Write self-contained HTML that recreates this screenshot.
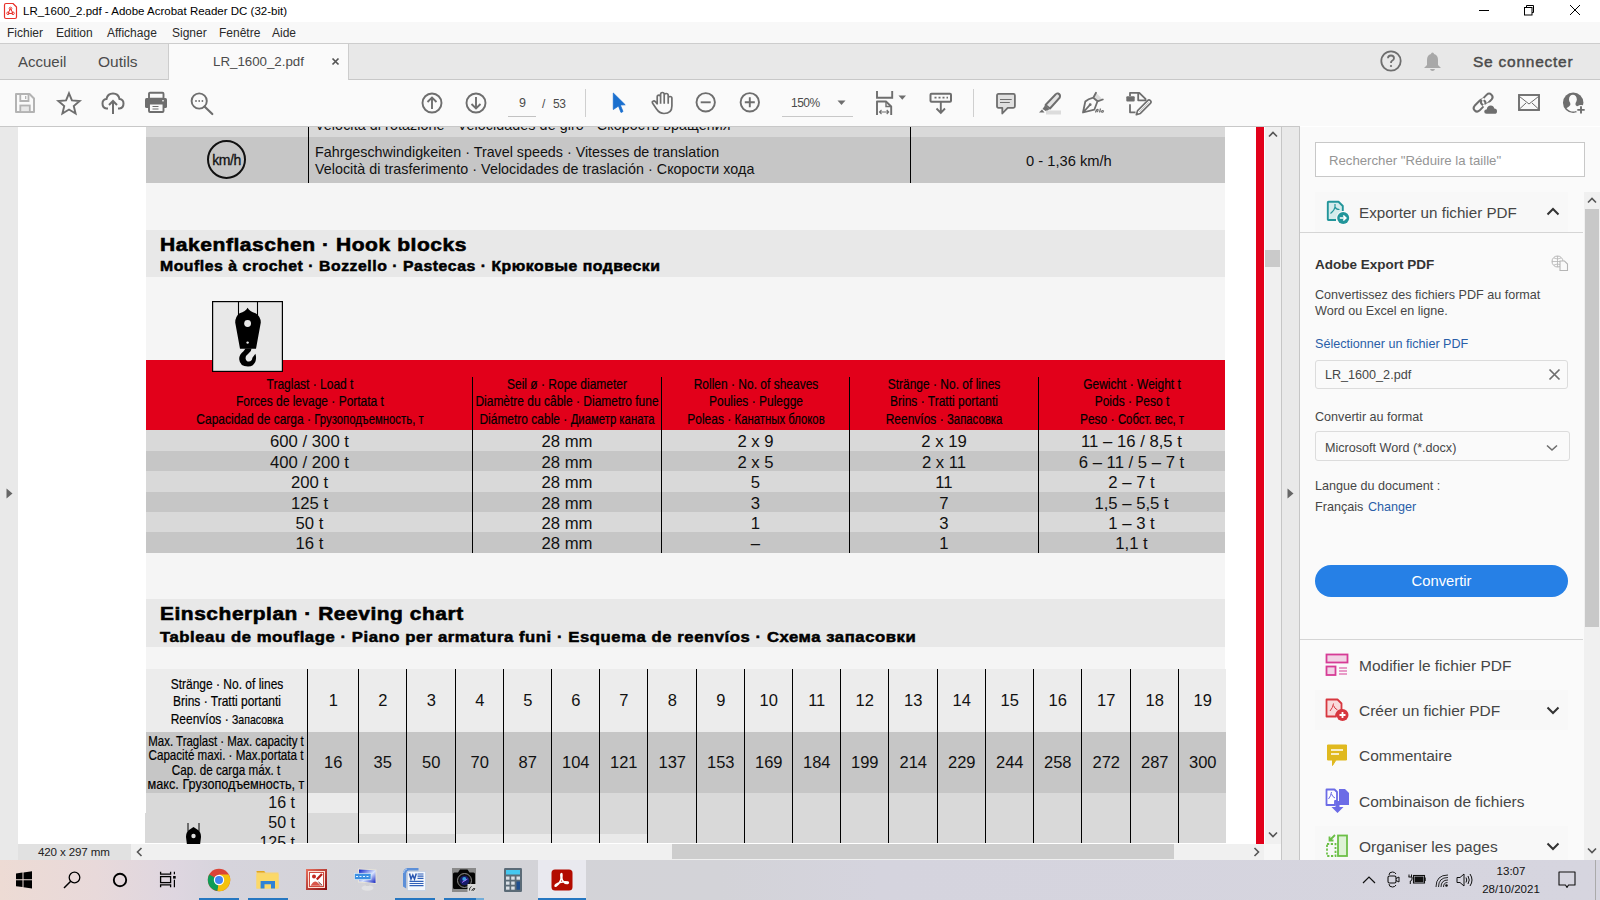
<!DOCTYPE html>
<html><head><meta charset="utf-8"><style>
*{margin:0;padding:0;box-sizing:border-box}
html,body{width:1600px;height:900px;overflow:hidden;background:#fff;font-family:"Liberation Sans",sans-serif}
.a{position:absolute}
.t{position:absolute;white-space:nowrap;line-height:1}
svg{position:absolute;overflow:visible}
.pt{font-size:14.3px;color:#111}
.ft{font-weight:bold;color:#000;-webkit-text-stroke:0.4px #000}
.hh{font-size:14.8px;color:#000;-webkit-text-stroke:0.2px #000;text-align:center;transform:scaleX(0.81);transform-origin:center}
.cy{font-size:14px}
.hv{font-size:16.7px;color:#111;text-align:center}
.rn{font-size:16.5px;color:#111;text-align:center}
</style></head><body>
<div class="a" style="left:0;top:0;width:1600px;height:22px;background:#fff"></div>
<svg style="left:3px;top:2px" width="15" height="18" viewBox="0 0 15 18"><path d="M3 1.5 H10 L13.5 5 V15 Q13.5 16.5 12 16.5 H3 Q1.5 16.5 1.5 15 V3 Q1.5 1.5 3 1.5 Z" fill="#fff" stroke="#e8312a" stroke-width="1.2" stroke-linejoin="round"/><path d="M7.5 6.5 L5.2 11 M7.5 6.5 L9.8 11 M5.2 11.5 H9.8" fill="none" stroke="#e8312a" stroke-width="1"/><circle cx="7.5" cy="6.5" r="1.3" fill="none" stroke="#e8312a" stroke-width="0.9"/><circle cx="5" cy="11.3" r="1.3" fill="none" stroke="#e8312a" stroke-width="0.9"/><circle cx="10" cy="11.3" r="1.3" fill="none" stroke="#e8312a" stroke-width="0.9"/></svg>
<div class="t" style="left:23px;top:6px;font-size:11.5px;color:#000">LR_1600_2.pdf - Adobe Acrobat Reader DC (32-bit)</div>
<div class="a" style="left:1479px;top:10px;width:10px;height:1px;background:#000"></div>
<svg style="left:1523px;top:4px" width="12" height="12" viewBox="0 0 12 12"><rect x="1.5" y="3.5" width="7.5" height="7.5" fill="none" stroke="#000" stroke-width="1"/><path d="M3.5 3.5 V1.5 H10.5 V8.5 H9" fill="none" stroke="#000" stroke-width="1"/></svg>
<svg style="left:1569px;top:4px" width="12" height="12" viewBox="0 0 12 12"><path d="M1 1 L11 11 M11 1 L1 11" stroke="#000" stroke-width="1"/></svg>
<div class="a" style="left:0;top:22px;width:1600px;height:21px;background:#f8f8f8"></div>
<div class="t" style="left:7px;top:27px;font-size:12px;color:#2a2a2a">Fichier</div>
<div class="t" style="left:56px;top:27px;font-size:12px;color:#2a2a2a">Edition</div>
<div class="t" style="left:107px;top:27px;font-size:12px;color:#2a2a2a">Affichage</div>
<div class="t" style="left:172px;top:27px;font-size:12px;color:#2a2a2a">Signer</div>
<div class="t" style="left:219px;top:27px;font-size:12px;color:#2a2a2a">Fenêtre</div>
<div class="t" style="left:272px;top:27px;font-size:12px;color:#2a2a2a">Aide</div>
<div class="a" style="left:0;top:43px;width:1600px;height:37px;background:#e8e8e8;border-top:1px solid #cdcdcd;border-bottom:1px solid #c8c8c8"></div>
<div class="a" style="left:168px;top:43px;width:181px;height:37px;background:#fafafa;border-left:1px solid #cdcdcd;border-right:1px solid #cdcdcd;border-top:1px solid #cdcdcd"></div>
<div class="t" style="left:18px;top:54px;font-size:15px;color:#4b4b4b">Accueil</div>
<div class="t" style="left:98px;top:54px;font-size:15.5px;color:#4b4b4b">Outils</div>
<div class="t" style="left:213px;top:55px;font-size:13.3px;color:#4b4b4b">LR_1600_2.pdf</div>
<svg style="left:331px;top:57px" width="9" height="9" viewBox="0 0 9 9"><path d="M1.5 1.5 L7.5 7.5 M7.5 1.5 L1.5 7.5" stroke="#555" stroke-width="1.7"/></svg>
<svg style="left:1380px;top:50px" width="22" height="22" viewBox="0 0 22 22"><circle cx="11" cy="11" r="9.7" fill="none" stroke="#6e6e6e" stroke-width="1.8"/><path d="M8 8.3 Q8 5.5 11 5.5 Q14 5.5 14 8.2 Q14 10 11.8 11 Q11 11.5 11 13" fill="none" stroke="#6e6e6e" stroke-width="1.8"/><circle cx="11" cy="16" r="1.1" fill="#6e6e6e"/></svg>
<svg style="left:1423px;top:51px" width="19" height="21" viewBox="0 0 19 21"><path d="M9.5 1.5 Q11 1.5 11 3 Q15 4 15 9 V14 L18 17 H1 L4 14 V9 Q4 4 8 3 Q8 1.5 9.5 1.5 Z" fill="#a8a8a8"/><path d="M7 18 H12 Q11.5 20 9.5 20 Q7.5 20 7 18Z" fill="#a8a8a8"/></svg>
<div class="t" style="left:1473px;top:54px;font-size:15.5px;letter-spacing:0.75px;color:#4b4b4b;-webkit-text-stroke:0.45px #4b4b4b">Se connecter</div>
<div class="a" style="left:0;top:80px;width:1600px;height:46px;background:#fafafa"></div>
<div class="a" style="left:0;top:126px;width:1300px;height:1px;background:#c8c8c8"></div>
<svg style="left:15px;top:93px" width="20" height="20" viewBox="0 0 20 20"><path d="M1 1 H14.5 L19 5.5 V19 H1 Z" fill="none" stroke="#b3b3b3" stroke-width="2" stroke-linejoin="round"/><path d="M5.3 1 V8 H13.5 V1" fill="none" stroke="#b3b3b3" stroke-width="1.8"/><rect x="10" y="3" width="1.3" height="3" fill="#b3b3b3"/><rect x="5.3" y="12.5" width="9.5" height="6.5" fill="#e8e8e8" stroke="#b3b3b3" stroke-width="1.8"/></svg>
<svg style="left:56px;top:92px" width="26" height="24" viewBox="0 0 26 24"><path d="M13.00 1.30 L15.94 8.45 L23.65 9.04 L17.76 14.05 L19.58 21.56 L13.00 17.50 L6.42 21.56 L8.24 14.05 L2.35 9.04 L10.06 8.45 Z" fill="none" stroke="#6e6e6e" stroke-width="1.9" stroke-linejoin="miter"/></svg>
<svg style="left:101px;top:92px" width="24" height="23" viewBox="0 0 24 23"><path d="M7 16.5 H5.5 Q1.5 16 1.5 11.5 Q1.5 7.5 5.5 7 Q6.5 1.5 12 1.5 Q17.5 1.5 18.5 7 Q22.5 7.5 22.5 11.5 Q22.5 16 18.5 16.5 H17" fill="none" stroke="#6e6e6e" stroke-width="2"/><path d="M12 22 V9 M8 13 L12 9 L16 13" fill="none" stroke="#6e6e6e" stroke-width="2"/></svg>
<svg style="left:145px;top:92px" width="22" height="21" viewBox="0 0 22 21"><rect x="4" y="0.7" width="14.5" height="6" rx="1" fill="none" stroke="#6e6e6e" stroke-width="1.9"/><rect x="0" y="6" width="22" height="10" rx="1.5" fill="#6e6e6e"/><rect x="4" y="11.5" width="14.5" height="8.5" rx="1" fill="#fafafa" stroke="#6e6e6e" stroke-width="1.9"/><rect x="7.5" y="14" width="6" height="1" fill="#6e6e6e"/><rect x="7.5" y="16.5" width="6" height="1" fill="#6e6e6e"/><rect x="17" y="8.3" width="2" height="1" fill="#fafafa"/></svg>
<svg style="left:190px;top:92px" width="24" height="23" viewBox="0 0 24 23"><circle cx="9.2" cy="9" r="7.6" fill="none" stroke="#6e6e6e" stroke-width="1.9"/><path d="M14.5 14.5 L22.3 22" stroke="#6e6e6e" stroke-width="2.2" stroke-linecap="round"/><circle cx="6" cy="9" r="0.9" fill="#6e6e6e"/><circle cx="9.2" cy="9" r="0.9" fill="#6e6e6e"/><circle cx="12.4" cy="9" r="0.9" fill="#6e6e6e"/></svg>
<svg style="left:421px;top:92px" width="22" height="22" viewBox="0 0 22 22"><circle cx="11" cy="11" r="9.5" fill="none" stroke="#6e6e6e" stroke-width="1.9"/><path d="M11 17 V5.5 M6.5 10 L11 5.5 L15.5 10" fill="none" stroke="#6e6e6e" stroke-width="1.9"/></svg>
<svg style="left:465px;top:92px" width="22" height="22" viewBox="0 0 22 22"><circle cx="11" cy="11" r="9.5" fill="none" stroke="#6e6e6e" stroke-width="1.9"/><path d="M11 5 V16.5 M6.5 12 L11 16.5 L15.5 12" fill="none" stroke="#6e6e6e" stroke-width="1.9"/></svg>
<div class="t" style="left:519px;top:97px;font-size:12.5px;color:#4b4b4b">9</div>
<div class="a" style="left:508px;top:116px;width:28px;height:1px;background:#c2c2c2"></div>
<div class="t" style="left:542px;top:97.5px;font-size:12px;color:#4b4b4b">/</div>
<div class="t" style="left:553px;top:97.5px;font-size:12px;color:#4b4b4b;letter-spacing:-0.3px">53</div>
<div class="a" style="left:585px;top:89px;width:1px;height:28px;background:#cfcfcf"></div>
<svg style="left:612px;top:92px" width="15" height="22" viewBox="0 0 15 22"><path d="M1.3 1 L13.2 12.8 L8.3 13 L11 19.5 L9 20.5 L6.5 14 L1.3 17.5 Z" fill="#1a6fce" stroke="#1a6fce" stroke-width="0.8" stroke-linejoin="round"/></svg>
<svg style="left:650px;top:90px" width="24" height="25" viewBox="0 0 24 25"><path d="M7.2 14.5 V7 Q7.2 5.1 8.9 5.1 Q10.6 5.1 10.6 7 V4.4 Q10.6 2.5 12.4 2.5 Q14.2 2.5 14.2 4.4 V5.4 Q14.2 3.5 16.2 3.5 Q18.2 3.5 18.2 5.4 V8.3 Q18.2 6.5 20.1 6.5 Q21.9 6.5 21.9 8.3 V16 Q21.9 23.5 14 23.5 Q9.5 23.5 6.5 19 L2.6 13.3 Q1.8 11.8 3 11.2 Q4.3 10.5 5.5 11.8 L7.2 14 M10.6 7 V13.7 M14.2 5.4 V13.7 M18.2 8.3 V13.7" fill="none" stroke="#6e6e6e" stroke-width="1.7" stroke-linejoin="round"/></svg>
<svg style="left:695px;top:92px" width="22" height="22" viewBox="0 0 22 22"><circle cx="10.7" cy="10.3" r="9.2" fill="none" stroke="#6e6e6e" stroke-width="1.9"/><path d="M5.7 10.3 H15.7" stroke="#6e6e6e" stroke-width="1.9"/></svg>
<svg style="left:739px;top:92px" width="22" height="22" viewBox="0 0 22 22"><circle cx="10.8" cy="10.3" r="9.2" fill="none" stroke="#6e6e6e" stroke-width="1.9"/><path d="M5.8 10.3 H15.8 M10.8 5.3 V15.3" stroke="#6e6e6e" stroke-width="1.9"/></svg>
<div class="t" style="left:791px;top:97px;font-size:12px;color:#4b4b4b;letter-spacing:-0.5px">150%</div>
<svg style="left:837px;top:100px" width="9" height="6" viewBox="0 0 9 6"><path d="M0.5 0.5 H8.5 L4.5 5 Z" fill="#6e6e6e"/></svg>
<div class="a" style="left:782px;top:116px;width:71px;height:1px;background:#c8c8c8"></div>
<svg style="left:875px;top:90px" width="34" height="26" viewBox="0 0 34 26"><path d="M2 1 V7.8 H17.2 V1" fill="none" stroke="#6e6e6e" stroke-width="1.9"/><path d="M2 25 V11.5 H11 L16.2 16.5 V25" fill="none" stroke="#6e6e6e" stroke-width="1.9" stroke-linejoin="round"/><path d="M11 11.5 V16.5 H16.2" fill="none" stroke="#6e6e6e" stroke-width="1.4"/><path d="M4.5 22 H13.7 M6.5 20 L4.5 22 L6.5 24 M11.7 20 L13.7 22 L11.7 24" fill="none" stroke="#6e6e6e" stroke-width="1.1"/><path d="M23.5 5.5 H31 L27.3 9.8 Z" fill="#6e6e6e"/></svg>
<svg style="left:929px;top:92px" width="24" height="23" viewBox="0 0 24 23"><rect x="1.5" y="1.7" width="20.5" height="8" rx="1" fill="none" stroke="#6e6e6e" stroke-width="2"/><path d="M5.5 5.7 H7.5 M9.5 5.7 H11.5 M13.5 5.7 H15.5 M17.5 5.7 H19" stroke="#6e6e6e" stroke-width="1.8"/><path d="M11.8 10 V21 M7.5 16.5 L11.8 20.8 L16 16.5" fill="none" stroke="#6e6e6e" stroke-width="1.9"/></svg>
<div class="a" style="left:973px;top:89px;width:1px;height:28px;background:#cfcfcf"></div>
<svg style="left:995px;top:92px" width="22" height="23" viewBox="0 0 22 23"><path d="M3.5 1.9 H18.4 Q19.9 1.9 19.9 3.4 V14.3 Q19.9 15.8 18.4 15.8 H12.7 L7.3 21.5 V15.8 H3.5 Q2 15.8 2 14.3 V3.4 Q2 1.9 3.5 1.9 Z" fill="#e0e0e0" stroke="#6e6e6e" stroke-width="1.8" stroke-linejoin="round"/><path d="M5 7.5 H16.7 M5 10.5 H14.8" stroke="#6e6e6e" stroke-width="1.1"/></svg>
<svg style="left:1037px;top:92px" width="25" height="23" viewBox="0 0 25 23"><path d="M21 1.5 Q23.8 2.5 22.8 5.5 L13 16.5 L8.5 13 L18.5 2.5 Q19.5 1 21 1.5 Z" fill="#e4e4e4" stroke="#6e6e6e" stroke-width="1.9" stroke-linejoin="round"/><path d="M8 13.5 L12.5 17 L9.5 19.5 L5.5 17 Z" fill="#6e6e6e"/><path d="M2 20.5 L5 17.5 L7.5 20.5 Z" fill="#6e6e6e"/><rect x="9" y="18.5" width="15" height="4" fill="#dcdcdc"/></svg>
<svg style="left:1081px;top:91px" width="26" height="24" viewBox="0 0 26 24"><path d="M15 1.7 L21.8 8.5 L16.5 10 L12.3 6.7 Z" fill="#dcdcdc"/><path d="M15 1.7 L12.3 6.7 L16.5 10.3 L21.8 8.5 M12.3 6.7 Q7 8 4.3 10.5 L2 21.5 L13.3 18.7 L16.5 10.3 M2.5 21 L9.2 13.7" fill="none" stroke="#6e6e6e" stroke-width="1.8" stroke-linejoin="round" stroke-linecap="round"/><circle cx="9.2" cy="13.7" r="1.4" fill="#6e6e6e"/><path d="M14.5 21.5 Q15.5 18 17 18.5 Q17.5 20 16 21 M18.5 21.5 L19.5 17.5 M20 21 Q21 19 22.5 20 Q22.5 21.5 20.5 21.5" fill="none" stroke="#6e6e6e" stroke-width="1.2"/></svg>
<svg style="left:1124px;top:91px" width="28" height="25" viewBox="0 0 28 25"><path d="M6 5 V1.8 H15.3 L21.5 7.8 V10 M14.2 2 V9.3 H21.5 M6 13.3 V21.3 H11.5" fill="none" stroke="#6e6e6e" stroke-width="1.8" stroke-linejoin="round"/><rect x="2.3" y="5.2" width="8.4" height="5.3" rx="1" fill="#6e6e6e"/><path d="M12.3 23.7 L13.6 19.6 L23.6 9.6 Q25 8.2 26.4 9.6 Q27.8 11 26.4 12.4 L16.4 22.4 Z" fill="none" stroke="#6e6e6e" stroke-width="1.6" stroke-linejoin="round"/><path d="M15.2 21 L25 11.2" stroke="#aaa" stroke-width="0.8"/></svg>
<svg style="left:1470px;top:90px" width="30" height="26" viewBox="0 0 30 26"><path d="M16.77 14.53 L21.67 9.33 A3.4 3.4 0 0 0 16.73 4.67 L11.83 9.87 A3.4 3.4 0 0 0 16.77 14.53 Z" fill="none" stroke="#6e6e6e" stroke-width="2"/><path d="M9.40 20.60 L14.60 15.40 A3.4 3.4 0 0 0 9.80 10.60 L4.60 15.80 A3.4 3.4 0 0 0 9.40 20.60 Z" fill="none" stroke="#6e6e6e" stroke-width="2"/><path d="M12.3 8.7 L13.8 10.2 M13.4 16.4 L15 14.8" stroke="#fafafa" stroke-width="2.6"/><circle cx="21" cy="19.5" r="7.3" fill="#fafafa"/><path d="M16.5 23.8 Q14.2 23.8 14.2 21.6 Q14.2 19.3 16.8 19.2 Q17.3 15.5 20.8 15.5 Q23.6 15.5 24.3 18.6 Q27 18.8 27 21.2 Q27 23.8 24.5 23.8 Z" fill="#6e6e6e"/></svg>
<svg style="left:1518px;top:94px" width="22" height="17" viewBox="0 0 22 17"><rect x="1" y="1" width="20" height="15" fill="none" stroke="#6e6e6e" stroke-width="1.9"/><path d="M1.5 2.5 L11 10 L20.5 2.5 M1.5 15 L8 9 M20.5 15 L14 9" fill="none" stroke="#6e6e6e" stroke-width="1"/></svg>
<svg style="left:1561px;top:91px" width="26" height="25" viewBox="0 0 26 25"><circle cx="12.2" cy="11.7" r="10.25" fill="#6e6e6e"/><ellipse cx="11.9" cy="8.4" rx="3.9" ry="4.7" fill="#fafafa"/><path d="M9.3 11.5 Q10 14.3 8 15.6 Q6.3 16.6 5.46 17.36 A8.8 8.8 0 0 0 20.36 15.00 Q17.5 15.8 15.9 15.2 Q13.9 14.2 14.5 11.5 Z" fill="#fafafa"/><circle cx="20" cy="18.8" r="4.9" fill="#fafafa"/><path d="M20 15.2 V22.6 M16.3 18.9 H23.7" stroke="#6e6e6e" stroke-width="1.9"/></svg>
<div class="a" style="left:0;top:127px;width:18px;height:733px;background:#e9e9e9"></div>
<svg style="left:6px;top:488px" width="7" height="11" viewBox="0 0 7 11"><path d="M0.5 0.5 L6.5 5.5 L0.5 10.5 Z" fill="#666"/></svg>
<div class="a" style="left:18px;top:127px;width:1238px;height:717px;background:#fff"></div>
<div id="doc" class="a" style="left:0;top:0;width:1600px;height:900px;clip-path:inset(127px 344px 56px 18px)">
<div class="a" style="left:146px;top:120px;width:1079px;height:17px;background:#d9d9d9"></div>
<div class="t pt" style="left:315px;top:118px;letter-spacing:0.08px">Velocità di rotazione · Velocidades de giro · Скорость вращения</div>
<div class="a" style="left:146px;top:137px;width:1079px;height:46px;background:#c6c6c6"></div>
<div class="a" style="left:308px;top:120px;width:1.2px;height:63px;background:#000"></div>
<div class="a" style="left:910px;top:120px;width:1.2px;height:63px;background:#000"></div>
<div class="a" style="left:207px;top:140px;width:39px;height:39px;border:2px solid #111;border-radius:50%"></div>
<div class="t" style="left:206px;top:153px;width:41px;text-align:center;font-size:14px;color:#111;letter-spacing:-0.5px;-webkit-text-stroke:0.3px #111">km/h</div>
<div class="t pt" style="left:315px;top:145px">Fahrgeschwindigkeiten · Travel speeds · Vitesses de translation</div>
<div class="t pt" style="left:315px;top:162px;letter-spacing:0.03px">Velocità di trasferimento · Velocidades de traslación · Скорости хода</div>
<div class="t" style="left:1026px;top:154px;font-size:14.7px;color:#111">0 - 1,36 km/h</div>
<div class="a" style="left:146px;top:183px;width:1079px;height:660px;background:#f5f5f5"></div>
<div class="a" style="left:146px;top:230px;width:1079px;height:47px;background:#e8e8e8"></div>
<div class="t ft" style="left:160px;top:235.7px;font-size:18.8px;letter-spacing:0.5px;transform:scaleX(1.119);transform-origin:left;-webkit-text-stroke:0.6px #000">Hakenflaschen · Hook blocks</div>
<div class="t ft" style="left:160px;top:259px;font-size:14.5px;letter-spacing:0.5px;transform:scaleX(1.088);transform-origin:left;-webkit-text-stroke:0.5px #000">Moufles à crochet · Bozzello · Pastecas · Крюковые подвески</div>
<div class="a" style="left:146px;top:360px;width:1079px;height:70px;background:#e2001a"></div>
<svg style="left:212px;top:301px" width="71" height="71" viewBox="0 0 71 71">
 <rect x="0.6" y="0.6" width="69.8" height="69.8" fill="#e8e8e8" stroke="#000" stroke-width="1.2"/>
 <path d="M26.5 1 V14 M45.5 1 V14" stroke="#000" stroke-width="1.1"/>
 <path d="M35.6 6.8 Q37.5 10.5 43.6 12.2 Q48.8 15.5 48.8 21.5 L44 47.8 H28 L23.2 21.5 Q23.2 15.5 27.6 12.2 Q33.7 10.5 35.6 6.8 Z" fill="#000"/>
 <circle cx="35.6" cy="22.5" r="3.4" fill="#e8e8e8"/>
 <circle cx="35.6" cy="41.6" r="1.2" fill="#e8e8e8"/>
 <path d="M33.5 47.5 L39.5 47.5 Q39.5 50.5 36.5 52.5 Q33.3 54.8 33.6 57.5 Q34 60.6 36.9 60.6 Q39.9 60.6 40.4 56.8 L43.4 52.8 Q44.6 56.5 43.6 60 Q41.8 65.6 36 65.6 Q27.8 65.6 27.2 58.3 Q27 53.5 31.5 50.2 Z" fill="#000"/>
</svg>
<div class="a" style="left:146px;top:430px;width:1079px;height:21px;background:#d9d9d9"></div>
<div class="a" style="left:146px;top:451px;width:1079px;height:20px;background:#c6c6c6"></div>
<div class="a" style="left:146px;top:471px;width:1079px;height:21px;background:#d9d9d9"></div>
<div class="a" style="left:146px;top:492px;width:1079px;height:20px;background:#c6c6c6"></div>
<div class="a" style="left:146px;top:512px;width:1079px;height:20px;background:#d9d9d9"></div>
<div class="a" style="left:146px;top:532px;width:1079px;height:21px;background:#c6c6c6"></div>
<div class="a" style="left:472px;top:377px;width:1.2px;height:176px;background:#000"></div>
<div class="a" style="left:661px;top:377px;width:1.2px;height:176px;background:#000"></div>
<div class="a" style="left:849px;top:377px;width:1.2px;height:176px;background:#000"></div>
<div class="a" style="left:1038px;top:377px;width:1.2px;height:176px;background:#000"></div>
<div class="t hh" style="left:159.5px;top:377px;width:300px">Traglast · Load t</div>
<div class="t hh" style="left:159.5px;top:394px;width:300px">Forces de levage · Portata t</div>
<div class="t hh" style="left:159.5px;top:412px;width:300px">Capacidad de carga · <span class='cy'>Грузоподъемность, т</span></div>
<div class="t hv" style="left:209.5px;top:434px;width:200px">600 / 300 t</div>
<div class="t hv" style="left:209.5px;top:455px;width:200px">400 / 200 t</div>
<div class="t hv" style="left:209.5px;top:475px;width:200px">200 t</div>
<div class="t hv" style="left:209.5px;top:496px;width:200px">125 t</div>
<div class="t hv" style="left:209.5px;top:516px;width:200px">50 t</div>
<div class="t hv" style="left:209.5px;top:536px;width:200px">16 t</div>
<div class="t hh" style="left:417.0px;top:377px;width:300px">Seil ø · Rope diameter</div>
<div class="t hh" style="left:417.0px;top:394px;width:300px">Diamètre du câble · Diametro fune</div>
<div class="t hh" style="left:417.0px;top:412px;width:300px">Diámetro cable · <span class='cy'>Диаметр каната</span></div>
<div class="t hv" style="left:467.0px;top:434px;width:200px">28 mm</div>
<div class="t hv" style="left:467.0px;top:455px;width:200px">28 mm</div>
<div class="t hv" style="left:467.0px;top:475px;width:200px">28 mm</div>
<div class="t hv" style="left:467.0px;top:496px;width:200px">28 mm</div>
<div class="t hv" style="left:467.0px;top:516px;width:200px">28 mm</div>
<div class="t hv" style="left:467.0px;top:536px;width:200px">28 mm</div>
<div class="t hh" style="left:605.5px;top:377px;width:300px">Rollen · No. of sheaves</div>
<div class="t hh" style="left:605.5px;top:394px;width:300px">Poulies · Pulegge</div>
<div class="t hh" style="left:605.5px;top:412px;width:300px">Poleas · <span class='cy'>Канатных блоков</span></div>
<div class="t hv" style="left:655.5px;top:434px;width:200px">2 x 9</div>
<div class="t hv" style="left:655.5px;top:455px;width:200px">2 x 5</div>
<div class="t hv" style="left:655.5px;top:475px;width:200px">5</div>
<div class="t hv" style="left:655.5px;top:496px;width:200px">3</div>
<div class="t hv" style="left:655.5px;top:516px;width:200px">1</div>
<div class="t hv" style="left:655.5px;top:536px;width:200px">–</div>
<div class="t hh" style="left:794.0px;top:377px;width:300px">Stränge · No. of lines</div>
<div class="t hh" style="left:794.0px;top:394px;width:300px">Brins · Tratti portanti</div>
<div class="t hh" style="left:794.0px;top:412px;width:300px">Reenvíos · <span class='cy'>Запасовка</span></div>
<div class="t hv" style="left:844.0px;top:434px;width:200px">2 x 19</div>
<div class="t hv" style="left:844.0px;top:455px;width:200px">2 x 11</div>
<div class="t hv" style="left:844.0px;top:475px;width:200px">11</div>
<div class="t hv" style="left:844.0px;top:496px;width:200px">7</div>
<div class="t hv" style="left:844.0px;top:516px;width:200px">3</div>
<div class="t hv" style="left:844.0px;top:536px;width:200px">1</div>
<div class="t hh" style="left:981.5px;top:377px;width:300px">Gewicht · Weight t</div>
<div class="t hh" style="left:981.5px;top:394px;width:300px">Poids · Peso t</div>
<div class="t hh" style="left:981.5px;top:412px;width:300px">Peso · <span class='cy'>Собст. вес, т</span></div>
<div class="t hv" style="left:1031.5px;top:434px;width:200px">11 – 16 / 8,5 t</div>
<div class="t hv" style="left:1031.5px;top:455px;width:200px">6 – 11 / 5 – 7 t</div>
<div class="t hv" style="left:1031.5px;top:475px;width:200px">2 – 7 t</div>
<div class="t hv" style="left:1031.5px;top:496px;width:200px">1,5 – 5,5 t</div>
<div class="t hv" style="left:1031.5px;top:516px;width:200px">1 – 3 t</div>
<div class="t hv" style="left:1031.5px;top:536px;width:200px">1,1 t</div>
<div class="a" style="left:146px;top:599px;width:1079px;height:48px;background:#e8e8e8"></div>
<div class="t ft" style="left:160px;top:604.9px;font-size:18.8px;letter-spacing:0.5px;transform:scaleX(1.113);transform-origin:left;-webkit-text-stroke:0.6px #000">Einscherplan · Reeving chart</div>
<div class="t ft" style="left:160px;top:630px;font-size:14.5px;letter-spacing:0.5px;transform:scaleX(1.148);transform-origin:left;-webkit-text-stroke:0.5px #000">Tableau de mouflage · Piano per armatura funi · Esquema de reenvíos · Схема запасовки</div>
<div class="a" style="left:146px;top:669px;width:1080px;height:63px;background:#ececec"></div>
<div class="a" style="left:146px;top:732px;width:1080px;height:61px;background:#c6c6c6"></div>
<div class="a" style="left:146px;top:793px;width:1080px;height:50px;background:#d9d9d9"></div><div class="a" style="left:145px;top:813px;width:1px;height:30px;background:#d9d9d9"></div>
<div class="a" style="left:308px;top:793px;width:50px;height:20px;background:#ebebeb"></div>
<div class="a" style="left:359px;top:813px;width:96px;height:21px;background:#ebebeb"></div>
<div class="a" style="left:456px;top:834px;width:191px;height:9px;background:#e9e9e9"></div>
<div class="a" style="left:307px;top:669px;width:1.2px;height:174px;background:#000"></div>
<div class="a" style="left:358px;top:669px;width:1.2px;height:174px;background:#000"></div>
<div class="a" style="left:406px;top:669px;width:1.2px;height:174px;background:#000"></div>
<div class="a" style="left:455px;top:669px;width:1.2px;height:174px;background:#000"></div>
<div class="a" style="left:503px;top:669px;width:1.2px;height:174px;background:#000"></div>
<div class="a" style="left:551px;top:669px;width:1.2px;height:174px;background:#000"></div>
<div class="a" style="left:599px;top:669px;width:1.2px;height:174px;background:#000"></div>
<div class="a" style="left:647px;top:669px;width:1.2px;height:174px;background:#000"></div>
<div class="a" style="left:696px;top:669px;width:1.2px;height:174px;background:#000"></div>
<div class="a" style="left:744px;top:669px;width:1.2px;height:174px;background:#000"></div>
<div class="a" style="left:792px;top:669px;width:1.2px;height:174px;background:#000"></div>
<div class="a" style="left:840px;top:669px;width:1.2px;height:174px;background:#000"></div>
<div class="a" style="left:888px;top:669px;width:1.2px;height:174px;background:#000"></div>
<div class="a" style="left:937px;top:669px;width:1.2px;height:174px;background:#000"></div>
<div class="a" style="left:985px;top:669px;width:1.2px;height:174px;background:#000"></div>
<div class="a" style="left:1033px;top:669px;width:1.2px;height:174px;background:#000"></div>
<div class="a" style="left:1081px;top:669px;width:1.2px;height:174px;background:#000"></div>
<div class="a" style="left:1130px;top:669px;width:1.2px;height:174px;background:#000"></div>
<div class="a" style="left:1178px;top:669px;width:1.2px;height:174px;background:#000"></div>
<div class="t rn" style="left:303.25px;top:692px;width:60px">1</div>
<div class="t rn" style="left:303.25px;top:754px;width:60px">16</div>
<div class="t rn" style="left:352.75px;top:692px;width:60px">2</div>
<div class="t rn" style="left:352.75px;top:754px;width:60px">35</div>
<div class="t rn" style="left:401.25px;top:692px;width:60px">3</div>
<div class="t rn" style="left:401.25px;top:754px;width:60px">50</div>
<div class="t rn" style="left:449.75px;top:692px;width:60px">4</div>
<div class="t rn" style="left:449.75px;top:754px;width:60px">70</div>
<div class="t rn" style="left:497.75px;top:692px;width:60px">5</div>
<div class="t rn" style="left:497.75px;top:754px;width:60px">87</div>
<div class="t rn" style="left:545.75px;top:692px;width:60px">6</div>
<div class="t rn" style="left:545.75px;top:754px;width:60px">104</div>
<div class="t rn" style="left:593.75px;top:692px;width:60px">7</div>
<div class="t rn" style="left:593.75px;top:754px;width:60px">121</div>
<div class="t rn" style="left:642.25px;top:692px;width:60px">8</div>
<div class="t rn" style="left:642.25px;top:754px;width:60px">137</div>
<div class="t rn" style="left:690.75px;top:692px;width:60px">9</div>
<div class="t rn" style="left:690.75px;top:754px;width:60px">153</div>
<div class="t rn" style="left:738.75px;top:692px;width:60px">10</div>
<div class="t rn" style="left:738.75px;top:754px;width:60px">169</div>
<div class="t rn" style="left:786.75px;top:692px;width:60px">11</div>
<div class="t rn" style="left:786.75px;top:754px;width:60px">184</div>
<div class="t rn" style="left:834.75px;top:692px;width:60px">12</div>
<div class="t rn" style="left:834.75px;top:754px;width:60px">199</div>
<div class="t rn" style="left:883.25px;top:692px;width:60px">13</div>
<div class="t rn" style="left:883.25px;top:754px;width:60px">214</div>
<div class="t rn" style="left:931.75px;top:692px;width:60px">14</div>
<div class="t rn" style="left:931.75px;top:754px;width:60px">229</div>
<div class="t rn" style="left:979.75px;top:692px;width:60px">15</div>
<div class="t rn" style="left:979.75px;top:754px;width:60px">244</div>
<div class="t rn" style="left:1027.75px;top:692px;width:60px">16</div>
<div class="t rn" style="left:1027.75px;top:754px;width:60px">258</div>
<div class="t rn" style="left:1076.25px;top:692px;width:60px">17</div>
<div class="t rn" style="left:1076.25px;top:754px;width:60px">272</div>
<div class="t rn" style="left:1124.75px;top:692px;width:60px">18</div>
<div class="t rn" style="left:1124.75px;top:754px;width:60px">287</div>
<div class="t rn" style="left:1172.75px;top:692px;width:60px">19</div>
<div class="t rn" style="left:1172.75px;top:754px;width:60px">300</div>
<div class="t hh" style="left:77px;top:677px;width:300px">Stränge · No. of lines</div>
<div class="t hh" style="left:77px;top:694px;width:300px">Brins · Tratti portanti</div>
<div class="t hh" style="left:77px;top:712px;width:300px">Reenvíos · <span style='font-size:13px'>Запасовка</span></div>
<div class="t hh" style="left:76px;top:734px;width:300px;transform:scaleX(0.775)">Max. Traglast · Max. capacity t</div>
<div class="t hh" style="left:76px;top:748px;width:300px;transform:scaleX(0.785)">Capacité maxi. · Max.portata t</div>
<div class="t hh" style="left:76px;top:763px;width:300px;transform:scaleX(0.79)">Cap. de carga máx. t</div>
<div class="t hh" style="left:76px;top:777px;width:300px;transform:scaleX(0.855)">макс. Грузоподъемность, т</div>
<div class="t" style="left:195px;top:795px;width:100px;text-align:right;font-size:16px;color:#111">16 t</div>
<div class="t" style="left:195px;top:815px;width:100px;text-align:right;font-size:16px;color:#111">50 t</div>
<div class="t" style="left:195px;top:835px;width:100px;text-align:right;font-size:16px;color:#111">125 t</div>
<svg style="left:183px;top:823px" width="22" height="22" viewBox="0 0 22 22"><line x1="5" y1="0" x2="5" y2="8" stroke="#000"/><line x1="16" y1="0" x2="16" y2="8" stroke="#000"/><path d="M10.5 4 L15 7 Q18 9 18 14 L17 22 L4 22 L3 14 Q3 9 6 7 Z" fill="#000"/><circle cx="10.5" cy="13" r="2.2" fill="#ddd"/></svg>
</div>
<div class="a" style="left:1256px;top:127px;width:8px;height:717px;background:#e2001a"></div>
<div class="a" style="left:1265px;top:127px;width:16px;height:717px;background:#f0f0f0"></div>
<div class="a" style="left:1265px;top:250px;width:15px;height:17px;background:#cacaca"></div>
<svg style="left:1268px;top:131px" width="10" height="7" viewBox="0 0 10 7"><path d="M1 5.5 L5 1.5 L9 5.5" fill="none" stroke="#555" stroke-width="1.6"/></svg>
<svg style="left:1268px;top:831px" width="10" height="7" viewBox="0 0 10 7"><path d="M1 1.5 L5 5.5 L9 1.5" fill="none" stroke="#555" stroke-width="1.6"/></svg>
<div class="a" style="left:1281px;top:127px;width:1px;height:733px;background:#c6c6c6"></div>
<div class="a" style="left:1282px;top:127px;width:17px;height:733px;background:#e9e9e9"></div>
<svg style="left:1287px;top:488px" width="7" height="11" viewBox="0 0 7 11"><path d="M0.5 0.5 L6.5 5.5 L0.5 10.5 Z" fill="#666"/></svg>
<div class="a" style="left:1299px;top:127px;width:1px;height:733px;background:#c6c6c6"></div>
<div class="a" style="left:18px;top:844px;width:113px;height:16px;background:#e1e1e1"></div>
<div class="t" style="left:38px;top:846px;font-size:11.6px;color:#222;letter-spacing:-0.15px">420 x 297 mm</div>
<div class="a" style="left:131px;top:844px;width:1134px;height:16px;background:#f0f0f0"></div>
<div class="a" style="left:672px;top:844px;width:502px;height:15px;background:#cdcdcd"></div>
<svg style="left:136px;top:847px" width="7" height="10" viewBox="0 0 7 10"><path d="M5.5 1 L1.5 5 L5.5 9" fill="none" stroke="#555" stroke-width="1.6"/></svg>
<svg style="left:1253px;top:847px" width="7" height="10" viewBox="0 0 7 10"><path d="M1.5 1 L5.5 5 L1.5 9" fill="none" stroke="#555" stroke-width="1.6"/></svg>
<div class="a" style="left:1264px;top:844px;width:17px;height:16px;background:#f7f7f7"></div>
<div class="a" style="left:1300px;top:127px;width:300px;height:733px;background:#fafafa"></div>
<div class="a" style="left:1315px;top:142px;width:270px;height:35px;background:#fff;border:1px solid #c8c8c8"></div>
<div class="t" style="left:1329px;top:153.5px;font-size:13.2px;color:#959595">Rechercher "Réduire la taille"</div>
<div class="a" style="left:1584px;top:192px;width:16px;height:668px;background:#f0f0f0"></div>
<div class="a" style="left:1585px;top:209px;width:14px;height:418px;background:#c8c8c8"></div>
<svg style="left:1587px;top:197px" width="10" height="7" viewBox="0 0 10 7"><path d="M1 5.5 L5 1.5 L9 5.5" fill="none" stroke="#555" stroke-width="1.6"/></svg>
<svg style="left:1587px;top:847px" width="10" height="7" viewBox="0 0 10 7"><path d="M1 1.5 L5 5.5 L9 1.5" fill="none" stroke="#555" stroke-width="1.6"/></svg>
<div class="a" style="left:1315px;top:192px;width:253px;height:40px;background:#f8f8f8"></div>
<div class="a" style="left:1300px;top:232px;width:283px;height:1px;background:#d5d5d5"></div>
<svg style="left:1326px;top:200px" width="25" height="25" viewBox="0 0 25 25"><path d="M10 20 H2.5 Q1.8 20 1.8 19.3 V2.5 Q1.8 1.8 2.5 1.8 H12.5 L16.8 6 V11" fill="#d4ecec" stroke="#22959a" stroke-width="1.9" stroke-linejoin="round"/><path d="M9 4 V7 Q8.5 10.5 4.5 13.5 M9 7 Q10 9.5 13.5 9.5" fill="none" stroke="#22959a" stroke-width="1.2"/><circle cx="17.2" cy="18" r="7" fill="#fafafa"/><circle cx="17.2" cy="18" r="6" fill="#22959a"/><path d="M13.8 18 H19.5 M17.3 15.5 L19.8 18 L17.3 20.5" fill="none" stroke="#fff" stroke-width="1.7"/></svg>
<div class="t" style="left:1359px;top:204.5px;font-size:15.2px;color:#464646">Exporter un fichier PDF</div>
<svg style="left:1546px;top:207px" width="14" height="9" viewBox="0 0 14 9"><path d="M1.5 7.5 L7 2 L12.5 7.5" fill="none" stroke="#333" stroke-width="2"/></svg>
<div class="t" style="left:1315px;top:257.8px;font-size:13.5px;font-weight:bold;color:#333">Adobe Export PDF</div>
<svg style="left:1551px;top:255px" width="18" height="16" viewBox="0 0 18 16"><circle cx="6.5" cy="6.5" r="5.5" fill="none" stroke="#b5b5b5" stroke-width="1"/><path d="M1 6.5 H12 M6.5 1 V12 M3 3 Q6.5 5 10 3 M3 10 Q6.5 8 10 10" fill="none" stroke="#b5b5b5" stroke-width="0.8"/><path d="M9 6 H13.5 L16.5 9 V15.5 H9 Z" fill="#fafafa" stroke="#b5b5b5" stroke-width="1.1"/></svg>
<div class="t" style="left:1315px;top:288.5px;font-size:12.6px;color:#464646">Convertissez des fichiers PDF au format</div>
<div class="t" style="left:1315px;top:304.5px;font-size:12.6px;color:#464646">Word ou Excel en ligne.</div>
<div class="t" style="left:1315px;top:337.5px;font-size:12.6px;color:#2a5ea8">Sélectionner un fichier PDF</div>
<div class="a" style="left:1315px;top:360px;width:253px;height:29px;background:#fafafa;border:1px solid #dcdcdc;border-radius:3px"></div>
<div class="t" style="left:1325px;top:368.5px;font-size:12.6px;color:#464646">LR_1600_2.pdf</div>
<svg style="left:1548px;top:368px" width="13" height="13" viewBox="0 0 13 13"><path d="M1.5 1.5 L11.5 11.5 M11.5 1.5 L1.5 11.5" stroke="#6e6e6e" stroke-width="1.7"/></svg>
<div class="t" style="left:1315px;top:410.5px;font-size:12.6px;color:#464646">Convertir au format</div>
<div class="a" style="left:1315px;top:431px;width:255px;height:30px;background:#fafafa;border:1px solid #dcdcdc;border-radius:3px"></div>
<div class="t" style="left:1325px;top:441.5px;font-size:12.6px;color:#464646">Microsoft Word (*.docx)</div>
<svg style="left:1546px;top:444px" width="12" height="8" viewBox="0 0 12 8"><path d="M1 1.5 L6 6 L11 1.5" fill="none" stroke="#6e6e6e" stroke-width="1.6"/></svg>
<div class="t" style="left:1315px;top:479.5px;font-size:12.6px;color:#464646">Langue du document :</div>
<div class="t" style="left:1315px;top:500.5px;font-size:12.6px;color:#464646">Français</div>
<div class="t" style="left:1368px;top:500.5px;font-size:12.6px;color:#2a5ea8">Changer</div>
<div class="a" style="left:1315px;top:565px;width:253px;height:32px;background:#2680e6;border-radius:16px"></div>
<div class="t" style="left:1315px;top:573.5px;width:253px;text-align:center;font-size:14.8px;color:#fff">Convertir</div>
<div class="a" style="left:1300px;top:639px;width:283px;height:1px;background:#d5d5d5"></div>
<div class="a" style="left:1315px;top:690px;width:253px;height:40px;background:#f8f8f8"></div>
<div class="a" style="left:1315px;top:826px;width:253px;height:34px;background:#f8f8f8"></div>
<div class="t" style="left:1359px;top:657.5px;font-size:15.5px;color:#464646">Modifier le fichier PDF</div>
<div class="t" style="left:1359px;top:702.5px;font-size:15.5px;color:#464646">Créer un fichier PDF</div>
<svg style="left:1546px;top:706px" width="14" height="9" viewBox="0 0 14 9"><path d="M1.5 1.5 L7 7 L12.5 1.5" fill="none" stroke="#333" stroke-width="2"/></svg>
<div class="t" style="left:1359px;top:747.5px;font-size:15.5px;color:#464646">Commentaire</div>
<div class="t" style="left:1359px;top:793.5px;font-size:15.5px;color:#464646">Combinaison de fichiers</div>
<div class="t" style="left:1359px;top:838.5px;font-size:15.5px;color:#464646">Organiser les pages</div>
<svg style="left:1546px;top:842px" width="14" height="9" viewBox="0 0 14 9"><path d="M1.5 1.5 L7 7 L12.5 1.5" fill="none" stroke="#333" stroke-width="2"/></svg>
<svg style="left:1325px;top:653px" width="25" height="24" viewBox="0 0 25 24"><rect x="1.5" y="1.5" width="21" height="8" fill="#f2d4e6" stroke="#d63c96" stroke-width="1.8"/><rect x="1.5" y="13.5" width="9" height="8.5" fill="#f2d4e6" stroke="#d63c96" stroke-width="1.8"/><path d="M14 15 H22 M14 18 H22 M14 21 H22" stroke="#d63c96" stroke-width="1.1"/></svg>
<svg style="left:1325px;top:698px" width="25" height="24" viewBox="0 0 25 24"><path d="M1.5 1.5 H12.5 L16.5 5.5 V12 A6 6 0 0 0 11 18.5 H1.5 Z" fill="#f8dadb" stroke="#d7373f" stroke-width="1.8" stroke-linejoin="round"/><path d="M8.5 5.5 Q8 9.5 5 13 M8.5 7.5 Q9.5 10.5 12.5 12" fill="none" stroke="#d7373f" stroke-width="1"/><circle cx="17.5" cy="17" r="6" fill="#d7373f"/><path d="M14.5 17 H20.5 M17.5 14 V20" stroke="#fff" stroke-width="1.8"/></svg>
<svg style="left:1326px;top:744px" width="22" height="23" viewBox="0 0 22 23"><path d="M1.5 1 H20.5 V16 H10 L6.5 21.5 V16 H1.5 Z" fill="#e0b91f" stroke="#e0b91f" stroke-width="1" stroke-linejoin="round"/><path d="M5 6 H17 M5 10 H13" stroke="#fff" stroke-width="1.6"/></svg>
<svg style="left:1325px;top:788px" width="25" height="26" viewBox="0 0 25 26"><path d="M1.5 1.5 H9.5 L12 4 V13 H10 V17 H1.5 Z" fill="#fff" stroke="#6b6be6" stroke-width="1.8" stroke-linejoin="round"/><path d="M6.5 4 Q6 8 3.5 11 M6.5 6 Q7.5 9 10 10" fill="none" stroke="#6b6be6" stroke-width="1"/><path d="M14 1 H20 L24 5 V17 H14 Z" fill="#6b6be6"/><path d="M10.5 13 V19 H6.5 L12.5 25 L18.5 19 H14.5 V13 Z" fill="#6b6be6"/></svg>
<svg style="left:1325px;top:833px" width="25" height="25" viewBox="0 0 25 25"><rect x="13" y="2.5" width="9" height="20.5" fill="#def2d6" stroke="#6cbf47" stroke-width="1.8"/><path d="M2 11 H10.5 V23 H2 Z" fill="none" stroke="#6cbf47" stroke-width="1.8" stroke-dasharray="2.2 1.6"/><path d="M10 2 L4.5 7.5 M4.5 3.5 V7.5 H8.5" fill="none" stroke="#6cbf47" stroke-width="1.8"/></svg>
<div class="a" style="left:0;top:860px;width:1600px;height:40px;background:linear-gradient(90deg,#eddbd4 0%,#e8d9da 6%,#ded6e0 11%,#d6d4dc 14%,#d3d3d7 25%,#d3d3d8 45%,#d5d4de 55%,#d6d5df 100%)"></div>
<div class="a" style="left:538px;top:860px;width:48px;height:40px;background:#e9e9ef"></div>
<svg style="left:15px;top:871px" width="18" height="18" viewBox="0 0 18 18"><path d="M1 2.5 L7.5 1.6 V8.3 H1 Z M8.5 1.4 L17 0.2 V8.3 H8.5 Z M1 9.3 H7.5 V16 L1 15.2 Z M8.5 9.3 H17 V17.5 L8.5 16.2 Z" fill="#000"/></svg>
<svg style="left:62px;top:871px" width="20" height="20" viewBox="0 0 20 20"><circle cx="12.5" cy="6.5" r="5.3" fill="none" stroke="#000" stroke-width="1.3"/><path d="M8.7 10.3 L2 17" stroke="#000" stroke-width="1.5"/></svg>
<svg style="left:111px;top:871px" width="18" height="18" viewBox="0 0 18 18"><circle cx="9" cy="9" r="6.2" fill="none" stroke="#000" stroke-width="1.9"/></svg>
<svg style="left:159px;top:871px" width="19" height="18" viewBox="0 0 19 18"><path d="M1.6 0.8 V3.2 H11.6 V0.8 M1.6 16.2 V13.8 H11.6 V16.2" fill="none" stroke="#000" stroke-width="1.3"/><rect x="1.6" y="5.6" width="10" height="6" fill="none" stroke="#000" stroke-width="1.3"/><path d="M15.4 0.8 V3.3 M15.4 8.8 V16.2" stroke="#000" stroke-width="1.2"/><rect x="14.1" y="5" width="2.6" height="2.6" fill="#000"/></svg>
<svg style="left:207px;top:868px" width="24" height="24" viewBox="0 0 24 24"><circle cx="12" cy="12" r="11.2" fill="#db4437"/><path d="M12 12 L2.3 6.4 A11.2 11.2 0 0 0 10.5 23.1 Z" fill="#0f9d58"/><path d="M12 12 L10.5 23.1 A11.2 11.2 0 0 0 21.7 6.4 L12 6.4 Z" fill="#f4c20d"/><circle cx="12" cy="12" r="5.2" fill="#fff"/><circle cx="12" cy="12" r="4" fill="#4285f4"/></svg>
<div class="a" style="left:199px;top:898px;width:40px;height:2px;background:#2677c1"></div>
<svg style="left:256px;top:870px" width="23" height="19" viewBox="0 0 23 19"><path d="M0.5 1 H8 L9.5 2.5 H22.5 V18.5 H0.5 Z" fill="#f7d373"/><path d="M0.5 1 H8 L9.5 2.5 H1 Z" fill="#e1a621"/><rect x="0.5" y="4" width="22" height="14.5" fill="#fbd868"/><path d="M4.6 18.5 V11 H19 V18.5 H15 V14.3 H8.5 V18.5 Z" fill="#2f82d6"/></svg>
<div class="a" style="left:248px;top:898px;width:40px;height:2px;background:#2677c1"></div>
<svg style="left:306px;top:869px" width="21" height="21" viewBox="0 0 21 21"><defs><linearGradient id="acg" x1="0" y1="0" x2="1" y2="1"><stop offset="0" stop-color="#e8705e"/><stop offset="1" stop-color="#8a0e10"/></linearGradient></defs><rect x="0" y="0" width="21" height="21" fill="url(#acg)"/><rect x="2" y="2" width="17" height="17" fill="#fbe0d6"/><rect x="3.5" y="3.5" width="14" height="14" fill="#fff" stroke="#cf4a3e" stroke-width="1"/><circle cx="8" cy="7.6" r="2" fill="#c42a20"/><path d="M10.8 10.6 L16 5" stroke="#b8201a" stroke-width="2.2"/><path d="M4.5 16.8 Q8 10.8 11.2 13.2 L15 16.8 Z" fill="#d9564a"/><path d="M12.5 13 L16.2 16.5" stroke="#5a0c0c" stroke-width="1"/></svg>
<svg style="left:353px;top:867px" width="25" height="25" viewBox="0 0 25 25"><path d="M5 1.5 L23.5 2.5 V17 L5 15.5 Z" fill="#e8e4d8"/><path d="M6 2.5 L22.5 3.3 V16 L6 14.5 Z" fill="url(#rdg)"/><defs><linearGradient id="rdg" x1="0" y1="0" x2="1" y2="1"><stop offset="0" stop-color="#0a1fc8"/><stop offset="0.55" stop-color="#d8e4ff"/><stop offset="1" stop-color="#1020c0"/></linearGradient></defs><rect x="1.5" y="6.5" width="16.5" height="6" fill="#3c90e2" stroke="#d8e8f5" stroke-width="0.7"/><path d="M3 9.5 H17" stroke="#e8f4ff" stroke-width="1" stroke-dasharray="2 1.5"/><ellipse cx="14.5" cy="21" rx="6" ry="2.8" fill="#e2e2e4"/><path d="M12 16 L17 16.5 L16 19 L13 19 Z" fill="#d0d0d4"/></svg>
<svg style="left:402px;top:867px" width="25" height="25" viewBox="0 0 25 25"><path d="M1 6 Q1.5 1.5 5.5 1 H16.5 V3.5 H6.5 Q4.5 4 4.2 6.5 V21.5 L1 19.5 Z" fill="#5c8fd8"/><path d="M1.5 6 Q2 2.5 5 2" fill="none" stroke="#c7d9f2" stroke-width="0.8"/><rect x="5.5" y="4.5" width="18" height="19" fill="#f3f7fc" stroke="#c4d0e2" stroke-width="0.8"/><path d="M7.5 6.5 L9 12 L10.8 8 L12.5 12 L14.3 6.5" fill="none" stroke="#2a56b0" stroke-width="1.5"/><path d="M15.5 7 H21.5 M15.5 9.2 H21.5 M15.5 11.4 H21.5 M7.5 14.3 H21.5 M7.5 16.5 H21.5 M7.5 18.7 H21.5" stroke="#2f5fb8" stroke-width="1.2"/></svg>
<div class="a" style="left:395px;top:898px;width:40px;height:2px;background:#2677c1"></div>
<svg style="left:452px;top:868px" width="24" height="24" viewBox="0 0 24 24"><rect x="0" y="0" width="24" height="24" fill="#8a8a8a"/><path d="M1 6 Q1 4.5 2.5 4.5 H6 L8 1.5 H15.5 L17.5 4.5 H21.5 Q23 4.5 23 6 V19.5 Q23 21 21.5 21 H2.5 Q1 21 1 19.5 Z" fill="#050505"/><circle cx="12.5" cy="12.5" r="7" fill="#111" stroke="#9a9a9a" stroke-width="0.9"/><circle cx="12.5" cy="12.5" r="4.8" fill="#161a6a"/><circle cx="12.3" cy="11" r="2" fill="#3aa0e0"/><path d="M10 14.5 L15.5 11" stroke="#b070ff" stroke-width="0.9"/><rect x="15.5" y="16" width="8.5" height="8" fill="#d8d8d8"/><path d="M17.5 22.5 Q17 19.5 19.5 18.5 M19.5 22.5 Q21.5 19.5 22.8 20.5 Q22.5 22.5 20.5 22.5" fill="none" stroke="#222" stroke-width="0.9"/></svg>
<div class="a" style="left:444px;top:898px;width:32px;height:2px;background:#2677c1"></div>
<div class="a" style="left:476px;top:898px;width:8px;height:2px;background:#72acd8"></div>
<svg style="left:504px;top:868px" width="18" height="24" viewBox="0 0 18 24"><rect x="0" y="0" width="18" height="24" rx="1.2" fill="#5b6b77"/><rect x="2" y="2" width="14" height="4.5" fill="#45c8f0"/><g fill="#d9dfe5"><rect x="2" y="8.5" width="3.5" height="3.2"/><rect x="7.2" y="8.5" width="3.5" height="3.2"/><rect x="12.5" y="8.5" width="3.5" height="3.2"/><rect x="2" y="13.5" width="3.5" height="3.2"/><rect x="7.2" y="13.5" width="3.5" height="3.2"/><rect x="2" y="18.5" width="3.5" height="3.2"/><rect x="7.2" y="18.5" width="3.5" height="3.2"/></g><rect x="12.5" y="13.5" width="3.5" height="8.2" fill="#1f4f8f"/></svg>
<svg style="left:551px;top:869px" width="22" height="22" viewBox="0 0 22 22"><rect x="0.5" y="0.5" width="21" height="21" rx="3.5" fill="#b30b00"/><path d="M10.5 4.5 Q9.5 4.5 10 8 Q10.5 11 7.5 15 Q4.5 18 4 17 Q4 15 9 13.5 Q13 12.5 17 13 Q18 14 16.5 14.5 Q14 15 11.5 11.5 Q10.5 9.5 11 6 Q11 4.5 10.5 4.5 Z" fill="none" stroke="#fff" stroke-width="1.5" stroke-linejoin="round"/></svg>
<div class="a" style="left:538px;top:898px;width:48px;height:2px;background:#2677c1"></div>
<svg style="left:1362px;top:876px" width="14" height="8" viewBox="0 0 14 8"><path d="M1 7 L7 1 L13 7" fill="none" stroke="#111" stroke-width="1.2"/></svg>
<svg style="left:1387px;top:871px" width="13" height="17" viewBox="0 0 13 17"><path d="M2 4 Q2 1 5.5 1 Q8 1 9 3 M2 13 Q2 16 5.5 16 Q8 16 9 14" fill="none" stroke="#111" stroke-width="1"/><rect x="1" y="5" width="8" height="7" rx="1.5" fill="none" stroke="#111" stroke-width="1.1"/><path d="M9 7.5 L12 6 V11 L9 9.5" fill="none" stroke="#111" stroke-width="1"/></svg>
<svg style="left:1408px;top:873px" width="18" height="12" viewBox="0 0 18 12"><path d="M1 1.5 V4 M3.5 1.5 V4 M0.5 4 H4 V6 Q4 8 2.3 8 V11" fill="none" stroke="#111" stroke-width="1"/><rect x="5.5" y="2.5" width="11" height="7.5" fill="none" stroke="#111" stroke-width="1.1"/><rect x="6.5" y="3.5" width="9" height="5.5" fill="#111"/><rect x="16.5" y="4.5" width="1.2" height="3.5" fill="#111"/></svg>
<svg style="left:1435px;top:874px" width="14" height="14" viewBox="0 0 14 14"><path d="M1 13 Q1 1 13 1 M3.5 13 Q3.5 3.5 13 3.5 M6 13 Q6 6 13 6 M8.5 13 Q8.5 8.5 12.5 8.5" fill="none" stroke="#111" stroke-width="0.9"/><circle cx="11.5" cy="11.5" r="1.3" fill="#111"/></svg>
<svg style="left:1456px;top:873px" width="18" height="14" viewBox="0 0 18 14"><path d="M1 4.5 H4 L8 1 V13 L4 9.5 H1 Z" fill="none" stroke="#111" stroke-width="1"/><path d="M10 4.5 Q11.5 7 10 9.5 M12 3 Q14.5 7 12 11 M14 1 Q18 7 14 13" fill="none" stroke="#111" stroke-width="1"/></svg>
<div class="t" style="left:1482px;top:866px;width:58px;text-align:center;font-size:11.5px;color:#111">13:07</div>
<div class="t" style="left:1482px;top:884px;width:58px;text-align:center;font-size:11.5px;color:#111">28/10/2021</div>
<svg style="left:1558px;top:871px" width="18" height="19" viewBox="0 0 18 19"><path d="M1 1 H17 V14 H10.5 L9 16.5 L7.5 14 H1 Z" fill="none" stroke="#111" stroke-width="1.1" stroke-linejoin="round"/></svg>
<div class="a" style="left:1595px;top:860px;width:1px;height:40px;background:#aaa"></div>
</body></html>
